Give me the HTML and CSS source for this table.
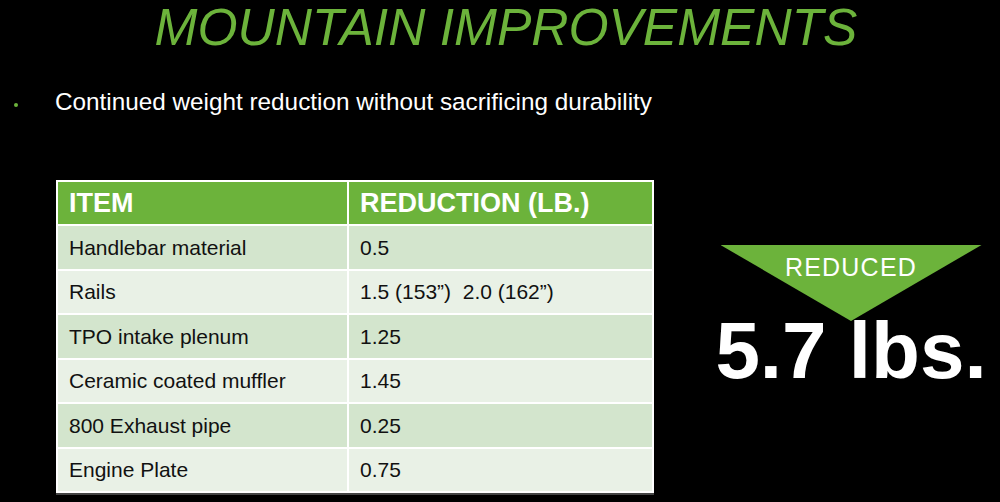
FILE: index.html
```html
<!DOCTYPE html>
<html>
<head>
<meta charset="utf-8">
<link rel="stylesheet" href="styles.css">
</head>
<body>
<div class="slide">
  <h1 class="title">MOUNTAIN IMPROVEMENTS</h1>
  <ul class="bullets">
    <li>Continued weight reduction without sacrificing durability</li>
  </ul>
  <div class="main">
    <div class="table">
      <div class="cell head">ITEM</div>
      <div class="cell head">REDUCTION (LB.)</div>
      <div class="cell dark">Handlebar material</div>
      <div class="cell dark">0.5</div>
      <div class="cell light">Rails</div>
      <div class="cell light">1.5 (153”)&nbsp; 2.0 (162”)</div>
      <div class="cell dark">TPO intake plenum</div>
      <div class="cell dark">1.25</div>
      <div class="cell light">Ceramic coated muffler</div>
      <div class="cell light">1.45</div>
      <div class="cell dark">800 Exhaust pipe</div>
      <div class="cell dark">0.25</div>
      <div class="cell light">Engine Plate</div>
      <div class="cell light">0.75</div>
    </div>
    <div class="callout">
      <div class="arrow">REDUCED</div>
      <div class="amount">5.7 lbs.</div>
    </div>
  </div>
</div>
</body>
</html>
```

FILE: styles.css
```css
html, body {
  margin: 0;
  padding: 0;
  background: #000;
}
body {
  width: 1000px;
  height: 502px;
  overflow: hidden;
  font-family: "Liberation Sans", Arial, sans-serif;
}
.slide {
  padding-top: 1px;
}
.title {
  margin: 0;
  font-size: 51.5px;
  line-height: 52px;
  font-weight: normal;
  font-style: italic;
  color: #6cb33b;
  text-align: center;
  padding-left: 12px;
}
.bullets {
  list-style: none;
  margin: 36px 0 0 0;
  padding: 0;
}
.bullets li {
  position: relative;
  padding-left: 55px;
  font-size: 24.3px;
  line-height: 26px;
  color: #fff;
}
.bullets li::before {
  content: "";
  position: absolute;
  left: 14px;
  top: 14px;
  width: 4px;
  height: 4px;
  border-radius: 50%;
  background: #6cb33b;
}
.main {
  display: flex;
  align-items: flex-start;
  margin-top: 65px;
}
.table {
  margin-left: 56px;
  width: 598px;
  box-sizing: border-box;
  padding: 2px;
  background: #fff;
  display: grid;
  grid-template-columns: 289px 1fr;
  grid-template-rows: 42px repeat(6, 42.5px);
  gap: 2px;
  box-shadow: 0 2px 0 #444;
}
.cell {
  display: flex;
  align-items: center;
  padding-left: 11px;
  padding-top: 1px;
  font-size: 21px;
  color: #111;
}
.head {
  background: #6cb33b;
  color: #fff;
  font-weight: bold;
  font-size: 27px;
}
.dark {
  background: #d3e5cd;
}
.light {
  background: #e9f1e6;
}
.callout {
  margin-left: 55px;
  margin-top: 65px;
  width: 284px;
  display: flex;
  flex-direction: column;
  align-items: center;
}
.arrow {
  width: 261px;
  height: 76px;
  box-sizing: border-box;
  padding-top: 10px;
  background: #6cb33b;
  clip-path: polygon(0 0, 100% 0, 50% 100%);
  color: #fff;
  text-align: center;
  font-size: 25px;
  line-height: 25px;
  letter-spacing: 1.2px;
}
.amount {
  margin-top: -10px;
  font-size: 80px;
  line-height: 79px;
  font-weight: bold;
  color: #fff;
  white-space: nowrap;
}
```
